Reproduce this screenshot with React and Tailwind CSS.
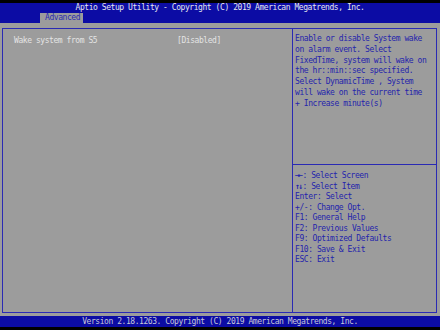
import React from 'react';

const FONT = "font-['DejaVu_Sans_Mono','Liberation_Mono',monospace] text-[8px] tracking-[-0.44px] leading-[10.5px]";

const HELP = [
  'Enable or disable System wake',
  'on alarm event. Select',
  'FixedTime, system will wake on',
  'the hr::min::sec specified.',
  'Select DynamicTime , System',
  'will wake on the current time',
  '+ Increase minute(s)',
];

const KEYS = [
  ['→←', ': Select Screen'],
  ['↑↓', ': Select Item'],
  ['', 'Enter: Select'],
  ['', '+/-: Change Opt.'],
  ['', 'F1: General Help'],
  ['', 'F2: Previous Values'],
  ['', 'F9: Optimized Defaults'],
  ['', 'F10: Save & Exit'],
  ['', 'ESC: Exit'],
];

export default function App() {
  return (
    <div className={`w-[440px] h-[330px] flex flex-col bg-black overflow-hidden ${FONT}`}>
      {/* Header */}
      <div className="h-[3px] bg-black" />
      <div className="h-[20px] bg-[#0c0ca4] flex flex-col">
        <div className="text-center text-[#e6e6ee] h-[10px] leading-[10px]">
          Aptio Setup Utility - Copyright (C) 2019 American Megatrends, Inc.
        </div>
        <div className="flex pl-[40px]">
          <div className="h-[10px] w-[43px] bg-[#9c9c9c] text-[#2c2cb0] leading-[10px] pl-[5px]">Advanced</div>
        </div>
      </div>

      {/* Body */}
      <div className="h-[293px] bg-[#9c9c9c] pt-[5px] pl-[2px] pr-[3px] pb-[3px] flex">
        <div className="flex-1 flex border border-[#2a2ab4]">
          <div className="w-[289px] pt-[7px] pl-[11px] text-[#e4e4e4]">
            <div className="flex">
              <span className="w-[163px]">Wake system from S5</span>
              <span>[Disabled]</span>
            </div>
          </div>
          <div className="flex-1 flex flex-col border-l border-[#2a2ab4] text-[#2424ac]">
            <div className="h-[136px] pt-[5px] pl-[2px] border-b border-[#2a2ab4] leading-[10.8px]">
              {HELP.map((l) => (
                <div key={l}>{l}</div>
              ))}
            </div>
            <div className="pt-[6px] pl-[2px]">
              {KEYS.map(([a, t]) => (
                <div key={t} className="flex">
                  {a && <span className="font-bold tracking-[-1.6px]">{a}</span>}
                  <span className={a ? 'pl-[1px]' : ''}>{t}</span>
                </div>
              ))}
            </div>
          </div>
        </div>
      </div>

      {/* Footer */}
      <div className="h-[11px] bg-[#0c0ca4] text-center text-[#c8c8d8] leading-[11px]">
        Version 2.18.1263. Copyright (C) 2019 American Megatrends, Inc.
      </div>
      <div className="h-[3px] bg-black" />
    </div>
  );
}
